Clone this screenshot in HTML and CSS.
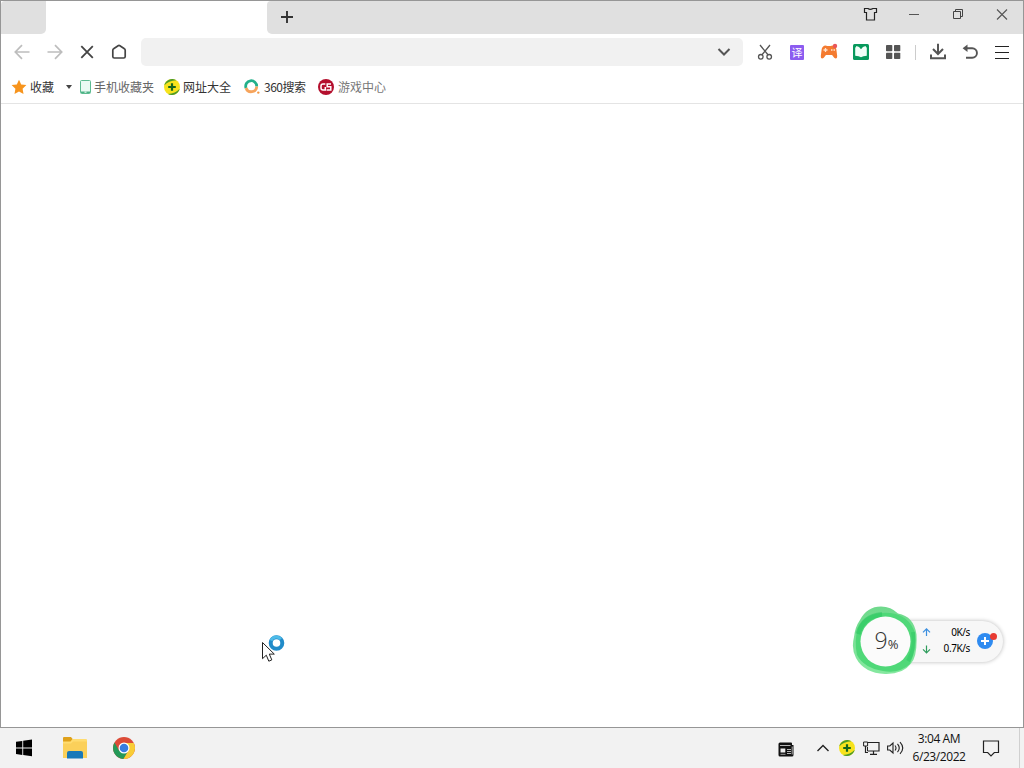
FILE: index.html
```html
<!DOCTYPE html>
<html lang="zh-CN">
<head>
<meta charset="utf-8">
<title>浏览器</title>
<link rel="stylesheet" href="styles.css">
</head>
<body>
<svg class="defs" width="0" height="0">
  <symbol id="plus-ball" viewBox="0 0 16 16">
    <circle cx="8" cy="8" r="8" fill="#f7e31c"/>
    <path d="M.3 6.400A8 8 0 0 1 12.400 1.300Q4.500 1.700 .3 6.400ZM15.700 9.800A8 8 0 0 1 4 15Q11.500 14.600 15.700 9.800Z" fill="#4b9a2c"/>
    <path d="M8 4.200v7.600M4.200 8h7.600" stroke="#14651d" stroke-width="2.200"/>
  </symbol>
  <linearGradient id="ring-outer" x1="0" y1="0" x2="0" y2="1"><stop offset="0" stop-color="#6fd98c"/><stop offset="1" stop-color="#86e8a0"/></linearGradient>
</svg>
<div class="browser">
  <div class="tabstrip">
    <div class="tab-side"></div>
    <div class="tab-active"></div>
    <div class="tab-rest">
      <svg class="new-tab" width="14" height="14"><path d="M7 1v12M1 7h12" stroke="#333" stroke-width="1.900"/></svg>
      <div class="window-buttons">
        <svg width="44" height="26" viewBox="0 0 44 26"><path d="M16.500 7.500h3.500q2 1.600 5 0h3.500v4h-2v7.500h-8v-7.500h-2Z" fill="none" stroke="#222" stroke-width="1.200"/></svg>
        <svg width="44" height="26" viewBox="0 0 44 26"><path d="M17 13.500h10" stroke="#555"/></svg>
        <svg width="44" height="26" viewBox="0 0 44 26"><path d="M17.500 10.500h7v7h-7zM19.500 10v-1.500h7v7H25" fill="none" stroke="#444"/></svg>
        <svg width="44" height="26" viewBox="0 0 44 26"><path d="M17 8.500l10 10M27 8.500l-10 10" stroke="#555" stroke-width="1.100"/></svg>
      </div>
    </div>
  </div>
  <div class="toolbar">
    <div class="nav">
      <svg viewBox="0 0 32 36"><path d="M23.500 18H9.500M16 11.200L9.300 18l6.700 6.800" fill="none" stroke="#bdbdbd" stroke-width="1.700"/></svg>
      <svg viewBox="0 0 32 36"><path d="M9.500 18h14M17 11.200l6.700 6.800-6.700 6.800" fill="none" stroke="#bdbdbd" stroke-width="1.700"/></svg>
      <svg viewBox="0 0 32 36"><path d="M11.300 12.200l11.500 11.600M22.800 12.200L11.300 23.800" fill="none" stroke="#444" stroke-width="1.800"/></svg>
      <svg viewBox="0 0 32 36"><path d="M10.800 16.200q0-1 .8-1.500l4.500-3q.9-.6 1.800 0l4.500 3q.8.500.8 1.500v6.300q0 1.500-1.500 1.500h-9.400q-1.500 0-1.500-1.500Z" fill="none" stroke="#444" stroke-width="1.700"/></svg>
    </div>
    <div class="address">
      <svg width="14" height="10"><path d="M1.500 2L7 7.500 12.500 2" fill="none" stroke="#555" stroke-width="2"/></svg>
    </div>
    <div class="tools">
      <svg viewBox="0 0 32 36"><path d="M11 11l8.200 10M21 11l-8.200 10" stroke="#555" stroke-width="1.300"/><g fill="none" stroke="#555" stroke-width="1.300"><circle cx="11.800" cy="22.800" r="2.300"/><circle cx="20.200" cy="22.800" r="2.300"/></g></svg>
      <div class="cell"><span class="translate">译</span></div>
      <svg viewBox="0 0 32 36"><path d="M12.500 11.500q3.500 1 7 0 2.800 0 3.800 3.500L24.200 22q.1 2.500-1.500 2.500-1.200 0-3.600-3.500h-6.200Q10.500 24.500 9.200 24.500q-1.600 0-1.400-2.500l.9-7q1-3.500 3.800-3.500Z" fill="#f47b30"/><path d="M12.500 14v4M10.500 16h4M18 16h1.500M20.500 16H22" stroke="#ffe3cf" stroke-width="1.300"/><circle cx="22" cy="12" r="2.200" fill="#e9565a"/></svg>
      <svg viewBox="0 0 32 36"><rect x="8" y="10" width="16" height="16" rx="1.500" fill="#07995c"/><path d="M10.200 13.500q.8 0 1.200-1.500 3 .3 4.600 3.300 1.600-3 4.600-3.300.4 1.500 1.200 1.500v8.300q-4 .1-5.800 1.500-1.800-1.400-5.800-1.500Z" fill="#f1fff8"/></svg>
      <svg viewBox="0 0 32 36"><g fill="#555"><rect x="9" y="11" width="6.300" height="6.300" rx=".8"/><rect x="17" y="11" width="6.300" height="6.300" rx=".8"/><rect x="9" y="18.800" width="6.300" height="6.300" rx=".8"/><rect x="17" y="18.800" width="6.300" height="6.300" rx=".8"/></g></svg>
      <span class="divider"></span>
      <svg viewBox="0 0 32 36"><path d="M16 9.800v10M11 15l5 5 5-5M9 20.500V24.300h14V20.500" fill="none" stroke="#555" stroke-width="2"/></svg>
      <svg viewBox="0 0 32 36"><path d="M11 14.300h7.200a4.600 4.600 0 0 1 0 9.500H12" fill="none" stroke="#555" stroke-width="1.900"/><path d="M13.500 10.500v7.600L8.600 14.300Z" fill="#555"/></svg>
      <svg viewBox="0 0 32 36"><path d="M9 12.500h14M9 18.500h14M9 24.500h14" stroke="#222" stroke-width="1.200"/></svg>
    </div>
  </div>
  <div class="bookmarks">
    <a class="bm bm-fav"><svg width="16" height="16"><path d="M8 .7l2.200 4.700 5.200.7-3.800 3.600.9 5.200L8 12.400l-4.500 2.500.9-5.200L.6 6.100l5.200-.7Z" fill="#f7941d"/></svg><span>收藏</span><i class="caret"></i></a>
    <a class="bm bm-phone"><svg width="11" height="14"><rect x=".5" y=".5" width="10" height="13" rx="1" fill="#eafaf3" stroke="#5dbb91"/><path d="M1 11.500h9V13H1Z" fill="#4bb285"/><path d="M4.500 12.200h2" stroke="#fff"/></svg><span>手机收藏夹</span></a>
    <a class="bm bm-site"><svg width="16" height="16"><use href="#plus-ball"/></svg><span>网址大全</span></a>
    <a class="bm bm-search"><svg width="16" height="16"><path d="M2 9A5.500 5.500 0 1 1 12.700 7.500" fill="none" stroke="#23b08a" stroke-width="2.800"/><path d="M12.700 7.500A5.500 5.500 0 0 1 2 9" fill="none" stroke="#f6a45c" stroke-width="2.800"/><circle cx="14.300" cy="13.600" r="1.200" fill="#f39a46"/></svg><span>360搜索</span></a>
    <a class="bm bm-game"><svg width="16" height="16"><circle cx="8" cy="8" r="8" fill="#b40f2d"/><path d="M7.300 5H5Q3 5 3 7v2q0 2 2 2h2.300V8M13 5H9.200v2.700h3.600V11H8.600" fill="none" stroke="#fff" stroke-width="1.500"/></svg><span>游戏中心</span></a>
  </div>
  <div class="page"></div>
</div>

<div class="meter">
  <div class="meter-pill">
    <svg class="arrows" width="9" height="28"><g fill="none" stroke-width="1.200"><path d="M4.500 9V2M1 5.300L4.500 1.800 8 5.300" stroke="#3b8fe0"/><path d="M4.500 18.500v7M1 22.300l3.500 3.500L8 22.300" stroke="#2f9d5d"/></g></svg>
    <div class="rates"><span>0K/s</span><span>0.7K/s</span></div>
    <svg class="boost" width="22" height="20"><circle cx="9" cy="11" r="8" fill="#2f8bf0"/><path d="M9 7v8M5 11h8" stroke="#fff" stroke-width="2"/><circle cx="17.500" cy="6.500" r="3.500" fill="#e83b32"/></svg>
  </div>
  <svg class="ring" width="68" height="74"><path d="M8 15Q15 1.500 29 1.500q10 0 17 7 16 3 18.500 21 1 22-5.500 29-8 11-26 10.500Q12 68 4 53-1 44 2 32q1-10 6-17Z" fill="url(#ring-outer)"/><path d="M6 23Q14 6 38 8q19 2 25 20 1 18-5 31-11 10-27 7Q12 63 5 50 2 36 6 23Z" fill="#4fd878"/><path d="M6 29Q11 11 30 9.500" fill="none" stroke="#25c45c" stroke-width="5" opacity=".5"/><path d="M61 27q3 16-5 29" fill="none" stroke="#25c45c" stroke-width="4" opacity=".4"/><circle cx="33.500" cy="36.500" r="25" fill="#fbfbfb"/></svg>
  <div class="load"><span class="load-number">9</span><span class="load-unit">%</span></div>
</div>

<svg class="pointer" width="26" height="30"><circle cx="16.500" cy="9" r="5.800" fill="none" stroke="#218bc9" stroke-width="4"/><path d="M11 6.500A6 6 0 0 1 21 5" fill="none" stroke="#4dbbe8" stroke-width="3"/><path d="M2.500 8.500v16.200l3.800-3.500 2.500 6 3-1.300-2.500-5.800h5Z" fill="#fff" stroke="#222"/></svg>

<div class="taskbar">
  <div class="launchers">
    <svg width="48" height="40"><path d="M16 13.800l6.300-.9v6.500H16zM23.200 12.800l8.800-1.200v7.800h-8.800zM16 20.400h6.300v6.500l-6.300-.9zM23.200 20.400H32v7.800L23.200 27z" fill="#000"/></svg>
    <svg width="52" height="40"><path d="M15 10q0-1 1-1h7l2 2.500V18H15z" fill="#dfa11b"/><path d="M15 13.500h7.500l2-2.500H38q1 0 1 1v17.500H15z" fill="#ffdc70"/><path d="M15 15.500h8l2-2h14V30H15z" fill="#fbd05a"/><path d="M19 30.500V25q0-2 2-2h12q2 0 2 2v5.500z" fill="#1979b8"/></svg>
    <svg width="48" height="40" viewBox="0 0 48 40"><circle cx="24" cy="20" r="11" fill="#dc4b37"/><path d="M14.500 14.500A11 11 0 0 0 23.500 31L28.500 22.500H19Z" fill="#249958"/><path d="M24 15h9.800A11 11 0 0 1 23.500 31L28.500 22.500Z" fill="#f9cd36"/><circle cx="24" cy="20" r="5.500" fill="#fff"/><circle cx="24" cy="20" r="4.300" fill="#387de0"/></svg>
  </div>
  <div class="tray">
    <svg class="news" width="16" height="15"><path d="M.5 2q0-1.500 1.500-1.500h11q1 0 1 1V3h1.500v10q0 1.500-1.500 1.500H2Q.5 14.500.5 13z" fill="#111"/><path d="M2 3.500h10.500M9 7.500h4M9 9.500h4M9 11.500h4M14.200 4.500v8" stroke="#c8c8c8" stroke-width=".9"/><path d="M2.500 6.500h4.800v4H2.500Z" fill="#eee"/><path d="M2.500 12.300h5" stroke="#aaa" stroke-width=".9"/></svg>
    <svg class="more" width="12" height="8"><path d="M.5 7L6 1.500 11.500 7" fill="none" stroke="#222" stroke-width="1.400"/></svg>
    <svg class="guard" width="16" height="16"><use href="#plus-ball"/></svg>
    <svg class="network" width="17" height="14"><path d="M5 1.500h11v8.500H4.500M2.500 5v6.500H5M10.500 10v3M7 13.300h7" fill="none" stroke="#222" stroke-width="1.200"/><path d="M4.500 6v4" stroke="#222"/><path d="M.6 1h4v4h-4z" fill="#f2f2f2" stroke="#222"/></svg>
    <svg class="volume" width="17" height="14"><path d="M.6 5h2.200L6 2v10L2.800 9H.6zM8 4.500q2 2.500 0 5M10.500 2.800q3.500 4.200 0 8.400M13 1.200q5.500 5.800 0 11.600" fill="none" stroke="#222" stroke-width="1.100"/></svg>
    <div class="clock"><span class="time">3:04 AM</span><span class="date">6/23/2022</span></div>
    <svg class="notice" width="18" height="17"><path d="M1.500 1h15v11.500h-4.200L9 15.800l-3.300-3.300H1.500z" fill="none" stroke="#222" stroke-width="1.200"/></svg>
    <span class="show-desktop"></span>
  </div>
</div>
</body>
</html>
```
FILE: styles.css
```css
* { box-sizing: border-box; }
body {
  margin: 0;
  width: 1024px;
  height: 768px;
  overflow: hidden;
  display: flex;
  flex-direction: column;
  background: #fff;
  font-family: "Noto Sans CJK SC", sans-serif;
  color: #333;
}
svg { display: block; flex: none; }
.defs { position: absolute; }

.browser {
  height: 728px;
  border: 1px solid #969696;
  display: flex;
  flex-direction: column;
}
.tabstrip { display: flex; height: 33px; }
.tab-side { width: 45px; background: #e0e0e0; border-radius: 4px 0 5px 0; }
.tab-active { width: 221px; background: #fff; }
.tab-rest {
  flex: 1;
  display: flex;
  justify-content: space-between;
  background: #e0e0e0;
  border-radius: 4px 0 0 5px;
}
.new-tab { margin: 9px 0 0 13px; }
.window-buttons { display: flex; margin-right: -1px; }

.toolbar { display: flex; align-items: center; height: 36px; padding: 0 5px; }
.nav, .tools { display: flex; align-items: center; }
.nav svg, .tools svg, .cell { width: 32px; height: 36px; }
.nav { width: 135px; }
.address {
  width: 602px;
  height: 28px;
  border-radius: 5px;
  background: #f1f1f1;
  display: flex;
  align-items: center;
  justify-content: flex-end;
  padding-right: 12px;
}
.tools { margin-left: 6px; }
.cell { display: flex; align-items: center; justify-content: center; }
.translate {
  width: 14px;
  height: 15px;
  background: #8c5cf0;
  color: #fff;
  font-size: 11px;
  line-height: 14px;
  text-align: center;
  border-radius: 1px;
}
.divider { width: 1px; height: 15px; margin: 0 6px; background: #ccc; }

.bookmarks {
  display: flex;
  align-items: center;
  height: 34px;
  padding: 1px 0 0 10px;
  border-bottom: 1px solid #e4e4e4;
  font-size: 12px;
  line-height: 16px;
  white-space: nowrap;
}
.bm { display: flex; align-items: center; height: 16px; }
.bm-fav { width: 69px; gap: 3px; }
.bm-phone { width: 84px; gap: 3px; color: #666; }
.bm-site { width: 80px; gap: 3px; }
.bm-search { width: 74px; gap: 4px; }
.bm-search span { letter-spacing: -0.5px; }
.bm-game { gap: 4px; color: #777; }
.caret {
  margin-left: 9px;
  border: 3.5px solid transparent;
  border-top: 4px solid #444;
  border-bottom: 0;
}
.page { flex: 1; }

.meter { position: absolute; left: 852px; top: 605px; width: 152px; height: 72px; }
.meter-pill {
  position: absolute;
  left: 34px;
  top: 16px;
  width: 117px;
  height: 41px;
  border-radius: 21px;
  background: #f7f7f7;
  box-shadow: 0 0 4px rgba(0, 0, 0, .28);
  display: flex;
  align-items: flex-start;
  padding-left: 36px;
}
.arrows { margin-top: 6px; }
.rates {
  width: 39px;
  margin-top: 3px;
  display: flex;
  flex-direction: column;
  align-items: flex-end;
  font: 10px/16px "Noto Sans", sans-serif;
  letter-spacing: -0.4px;
  color: #000;
}
.boost { margin: 9px 0 0 6px; }
.ring { position: absolute; left: 0; top: 0; }
.load {
  position: absolute;
  left: 9px;
  top: 12px;
  width: 50px;
  height: 50px;
  display: flex;
  justify-content: center;
  align-items: baseline;
  color: #333;
  line-height: 47px;
}
.load-number { font-family: "Open Sans", sans-serif; font-weight: 300; font-size: 23px; }
.load-unit { font-family: "Open Sans", sans-serif; font-size: 13px; letter-spacing: -1px; }
.pointer { position: absolute; left: 260px; top: 634px; }

.taskbar {
  height: 40px;
  background: #f2f2f2;
  display: flex;
  justify-content: space-between;
}
.launchers { display: flex; }
.tray { display: flex; align-items: center; }
.news { margin: 3px 23px 0 0; }
.more { margin-right: 10px; }
.guard { margin-right: 8px; }
.network { margin-right: 7px; }
.volume { margin-right: 5px; }
.clock {
  width: 60px;
  display: flex;
  flex-direction: column;
  align-items: center;
  font: 12px/18px "Open Sans", sans-serif;
  letter-spacing: -0.42px;
  white-space: nowrap;
  padding-bottom: 1px;
  color: #111;
}
.notice { margin: 0 19px 0 13px; }
.show-desktop { width: 5px; height: 40px; border-left: 1px solid #d0d0d0; }
```
